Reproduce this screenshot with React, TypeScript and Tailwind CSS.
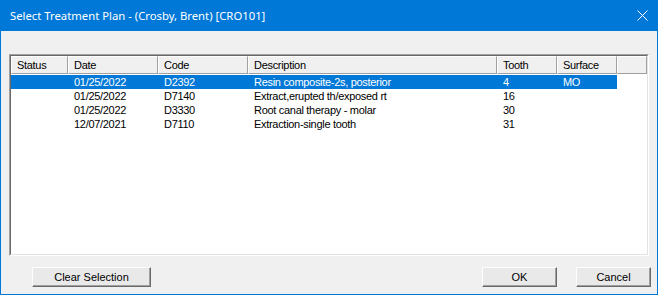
import React from "react";

const cols = [
  { label: "Status", w: "w-[57px]" },
  { label: "Date", w: "w-[90px]" },
  { label: "Code", w: "w-[90px]" },
  { label: "Description", w: "w-[249px]" },
  { label: "Tooth", w: "w-[60px]" },
  { label: "Surface", w: "w-[60px]" },
];

const rows = [
  ["", "01/25/2022", "D2392", "Resin composite-2s, posterior", "4", "MO"],
  ["", "01/25/2022", "D7140", "Extract,erupted th/exposed rt", "16", ""],
  ["", "01/25/2022", "D3330", "Root canal therapy - molar", "30", ""],
  ["", "12/07/2021", "D7110", "Extraction-single tooth", "31", ""],
];

function Btn({ label, w }: { label: string; w: string }) {
  return (
    <div
      className={`${w} h-[20px] flex items-center justify-center bg-[#e9e9e9] border border-t-[#fdfdfd] border-l-[#fdfdfd] border-r-[#696969] border-b-[#696969] shadow-[inset_-1px_-1px_0_#a0a0a0] text-[11px] text-black`}
    >
      {label}
    </div>
  );
}

export default function App() {
  return (
    <div className="w-[658px] h-[295px] flex flex-col bg-[#0078d7] font-['Liberation_Sans',Arial,sans-serif]">
      <div className="h-[31px] shrink-0 flex items-center justify-between pl-[10px] pr-[10px]">
        <span className="text-white text-[11.3px] font-['Noto_Sans',sans-serif] leading-none">
          Select Treatment Plan - (Crosby, Brent) [CRO101]
        </span>
        <svg width="11" height="11" viewBox="0 0 11 11">
          <path d="M0.5 0.5 L10.5 10.5 M10.5 0.5 L0.5 10.5" stroke="white" strokeWidth="1" />
        </svg>
      </div>
      <div className="flex-1 mx-[1px] mb-[1px] bg-[#f0f0f0] flex flex-col">
        <div className="mt-[23px] mx-[8px] h-[202px] border border-t-[#a0a0a0] border-l-[#a0a0a0] border-r-[#ffffff] border-b-[#ffffff]">
          <div className="h-full bg-white border border-t-[#696969] border-l-[#696969] border-r-[#e3e3e3] border-b-[#e3e3e3] flex flex-col">
            <div className="flex h-[18px] shrink-0 bg-[#f0f0f0] text-[11px] tracking-[-0.3px] text-black">
              {cols.map((c) => (
                <div
                  key={c.label}
                  className={`${c.w} shrink-0 h-full flex items-center pl-[5px] border border-t-white border-l-white border-r-[#a0a0a0] border-b-[#a0a0a0]`}
                >
                  {c.label}
                </div>
              ))}
              <div className="flex-1 h-full border border-t-white border-l-white border-r-[#a0a0a0] border-b-[#a0a0a0]" />
            </div>
            <div className="pt-[1px] flex flex-col text-[11px] tracking-[-0.3px]">
              {rows.map((r, i) => (
                <div
                  key={i}
                  className={`flex w-[606px] h-[14px] items-center ${i === 0 ? "bg-[#0078d7] text-white" : "text-black"}`}
                >
                  {r.map((cell, j) => (
                    <div key={j} className={`${cols[j].w} shrink-0 pl-[6px] leading-none whitespace-nowrap`}>
                      {cell}
                    </div>
                  ))}
                </div>
              ))}
            </div>
          </div>
        </div>
        <div className="mt-[11px] flex items-center pl-[31px] pr-[6px]">
          <Btn label="Clear Selection" w="w-[119px]" />
          <div className="flex-1" />
          <Btn label="OK" w="w-[75px]" />
          <div className="w-[19px]" />
          <Btn label="Cancel" w="w-[75px]" />
        </div>
      </div>
    </div>
  );
}
